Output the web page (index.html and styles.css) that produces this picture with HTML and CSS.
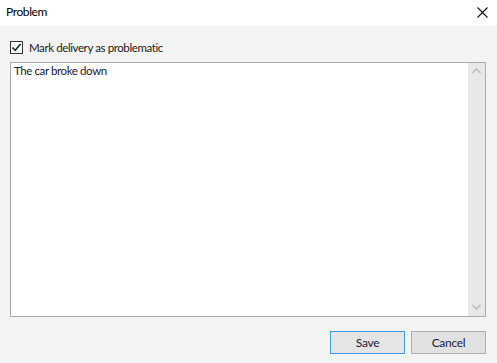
FILE: index.html
```html
<!DOCTYPE html>
<html lang="en">
<head>
    <meta charset="UTF-8">
    <title>Problem</title>
    <link rel="stylesheet" href="styles.css">
</head>
<body>
    <div class="dialog">
        <div class="titlebar">
            <span class="title">Problem</span>
            <span class="close">
                <svg width="11" height="11" viewBox="0 0 11 11"><path d="M0.5 0.5 L10.5 10.5 M10.5 0.5 L0.5 10.5" stroke="#111" stroke-width="1.1" fill="none"/></svg>
            </span>
        </div>

        <div class="content">
            <label class="check-row">
                <span class="checkbox">
                    <svg width="11" height="11" viewBox="0 0 11 11"><path d="M1.5 5.5 L4.2 8.3 L9.6 2" stroke="#222" stroke-width="1.6" fill="none"/></svg>
                </span>
                <span>Mark delivery as problematic</span>
            </label>

            <div class="memo">
                <div class="memo-text">The car broke down</div>
                <div class="scrollbar">
                    <span class="arrow">
                        <svg width="9" height="6" viewBox="0 0 9 6"><path d="M0.5 5 L4.5 1 L8.5 5" stroke="#c2c2c2" stroke-width="1.8" fill="none"/></svg>
                    </span>
                    <span class="arrow">
                        <svg width="9" height="6" viewBox="0 0 9 6"><path d="M0.5 1 L4.5 5 L8.5 1" stroke="#c2c2c2" stroke-width="1.8" fill="none"/></svg>
                    </span>
                </div>
            </div>

            <div class="buttons">
                <button class="btn btn-default">Save</button>
                <button class="btn">Cancel</button>
            </div>
        </div>
    </div>
</body>
</html>
```

FILE: styles.css
```css
* {
    margin: 0;
    padding: 0;
    box-sizing: border-box;
}

body {
    font-family: Lato, 'Noto Sans', 'Liberation Sans', sans-serif;
    font-size: 11.5px;
    letter-spacing: -0.4px;
    color: #000;
    background: #f4f4f4;
}

.dialog {
    width: 497px;
    height: 363px;
    display: flex;
    flex-direction: column;
}

.titlebar {
    height: 26px;
    background: #fff;
    display: flex;
    align-items: center;
    justify-content: space-between;
    padding: 0 9px 4px 6px;
}

.title {
    font-size: 12px;
}

.close {
    display: flex;
    margin-top: 3px;
}

.content {
    flex: 1;
    padding: 14px 11px 0 10px;
    display: flex;
    flex-direction: column;
}

.check-row {
    display: flex;
    align-items: center;
    gap: 6px;
    height: 14px;
    color: #222;
}

.checkbox {
    width: 13px;
    height: 13px;
    border: 1px solid #333;
    background: #fff;
    display: flex;
    align-items: center;
    justify-content: center;
}

.memo {
    margin-top: 8px;
    height: 255px;
    border: 1px solid #ababab;
    background: #fff;
    display: flex;
}

.memo-text {
    flex: 1;
    padding: 1px 3px 0;
    color: #1a1a3a;
    line-height: 14px;
}

.scrollbar {
    width: 17px;
    background: #e8e8e8;
    display: flex;
    flex-direction: column;
    justify-content: space-between;
    align-items: center;
    padding: 5px 0 6px;
}

.arrow {
    display: flex;
}

.buttons {
    margin-top: 14px;
    display: flex;
    justify-content: flex-end;
    gap: 6px;
}

.btn {
    width: 75px;
    height: 23px;
    font-family: inherit;
    font-size: 12px;
    letter-spacing: -0.3px;
    color: #1a1a3a;
    background: #e1e1e1;
    border: 1px solid #adadad;
}

.btn-default {
    border-color: #3c9ae6;
    background: #e5e5e5;
}
```
